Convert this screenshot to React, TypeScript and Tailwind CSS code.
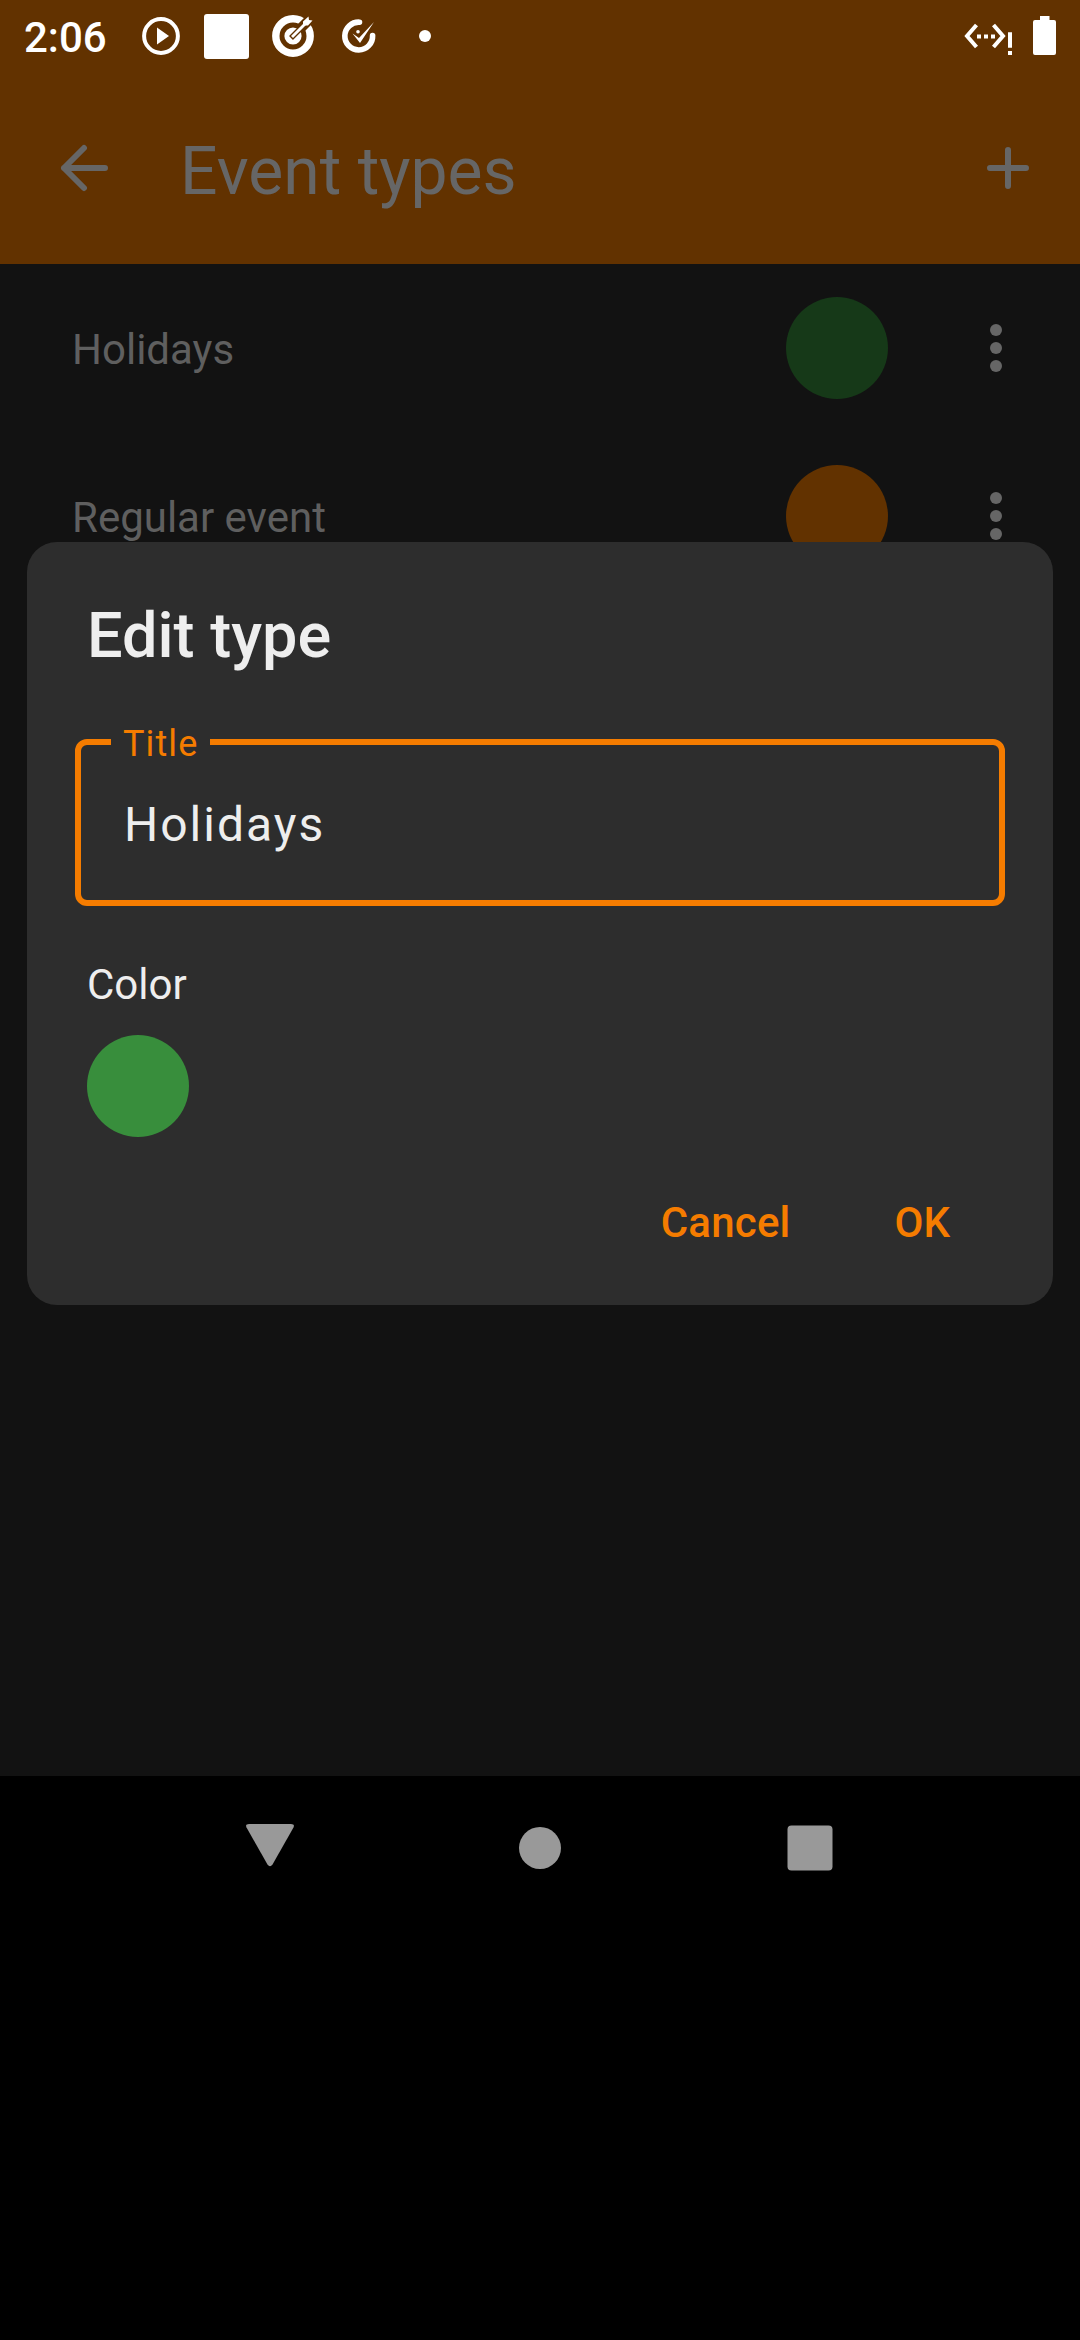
import React from 'react';

function StatusBar() {
  return (
    <div className="flex h-[72px] items-center text-white">
      <span className="ml-[24px] mt-[4px] w-[118px] text-[42px] leading-[48px] font-medium">2:06</span>
      <svg className="size-[38px]" viewBox="0 0 38 38">
        <circle cx="19" cy="19" r="16.9" fill="none" stroke="currentColor" strokeWidth="4" />
        <path d="M15 10.5 27 19 15 27.5Z" fill="currentColor" />
      </svg>
      <span className="ml-6 size-[45px] rounded-[3px] bg-white" />
      <svg className="ml-[23px] size-[42px]" viewBox="0 0 42 42">
        <circle cx="21" cy="21" r="17.2" fill="none" stroke="currentColor" strokeWidth="7.4" />
        <circle cx="21" cy="21" r="8.6" fill="currentColor" />
        <path d="M19 23 31 11" stroke="#623200" strokeWidth="5.5" />
        <path d="M29 13 40 2" stroke="#623200" strokeWidth="10" />
        <path d="M20 22 33 9" stroke="currentColor" strokeWidth="2.8" />
        <path d="M31 10.5V6.5L36.5 1.5 37 5 40.5 5.5 36 10.5Z" fill="currentColor" />
      </svg>
      <svg className="ml-[28px] size-9 overflow-visible" viewBox="0 0 36 36">
        <path d="M17.500 4.200A13.900 13.900 0 1 0 30.600 17.500" fill="none" stroke="currentColor" strokeWidth="5.6" strokeLinecap="round" />
        <path d="M10.5 15.500 17 20 32 4 18 25Z" fill="currentColor" />
        <circle cx="16" cy="13.8" r="1.8" fill="currentColor" />
      </svg>
      <span className="ml-[41px] size-3 rounded-full bg-white" />
      <svg className="ml-auto h-9 w-[50px] overflow-visible" viewBox="0 0 50 36">
        <path d="M12.5 7 3 18 12.500 29M29.500 7 39 18 29.500 29" fill="none" stroke="currentColor" strokeWidth="4" />
        <path d="M13 16.500h4v4h-4zM20 16.500h4v4h-4zM27 16.500h4v4h-4zM44 14.300h4v15.400h-4zM44 33h4v4h-4z" fill="currentColor" />
      </svg>
      <svg className="mr-6 mb-px ml-[19px] h-[39px] w-[23px]" viewBox="0 0 23 39">
        <path d="M7 0h9.500v4H21a2 2 0 0 1 2 2v31a2 2 0 0 1-2 2H2a2 2 0 0 1-2-2V6a2 2 0 0 1 2-2h5z" fill="currentColor" />
      </svg>
    </div>
  );
}

function AppBar() {
  return (
    <div className="flex h-48 items-center pr-[48px] pl-[60px] text-[#666666]">
      <svg className="size-12" viewBox="0 0 48 48" fill="none" stroke="currentColor" strokeWidth="6" strokeLinecap="round" strokeLinejoin="round">
        <path d="M45 24H4M24 4 4 24 24 44" />
      </svg>
      <h1 className="mt-[7px] ml-[72px] text-[66px] leading-[78px] font-normal">Event types</h1>
      <svg className="ml-auto size-12" viewBox="0 0 48 48" stroke="currentColor" strokeWidth="6" strokeLinecap="round">
        <path d="M24 6V42M6 24H42" />
      </svg>
    </div>
  );
}

function EventRow({ name, swatch }: { name: string; swatch: string }) {
  return (
    <div className="flex h-[168px] items-center pr-[78px] pl-[72px]">
      <span className="mt-[3px] flex-1 text-[42px] leading-[50px] text-[#5f5f5f]">{name}</span>
      <span className={`size-[102px] rounded-full ${swatch}`} />
      <div className="ml-[102px] flex flex-col gap-1.5">
        <i className="size-3 rounded-full bg-[#666666]" />
        <i className="size-3 rounded-full bg-[#666666]" />
        <i className="size-3 rounded-full bg-[#666666]" />
      </div>
    </div>
  );
}

function EditDialog() {
  return (
    <section className="absolute top-[542px] left-[27px] flex h-[763px] w-[1026px] flex-col rounded-[30px] bg-[#2d2d2d] px-[48px] text-[#eeeeee]">
      <h2 className="mt-[54px] ml-[12px] text-[63px] leading-[80px] font-medium">Edit type</h2>
      <div className="relative mt-[63px] flex h-[167px] items-center rounded-[12px] border-[6px] border-[#f57c00]">
        <label className="absolute -top-[23px] left-[30px] w-[99px] bg-[#2d2d2d] pl-[12px] text-[36px] leading-[44px] tracking-[1.1px] text-[#f57c00]">
          Title
        </label>
        <span className="mt-[4px] ml-[43px] text-[48px] leading-[56px] tracking-[2px]">Holidays</span>
      </div>
      <span className="mt-[54px] ml-[12px] text-[42px] leading-[50px]">Color</span>
      <span className="mt-[25px] ml-[12px] size-[102px] rounded-full bg-[#388e3c]" />
      <div className="mt-[61px] flex justify-end pr-[55px] text-[42px] leading-[50px] font-medium text-[#f57c00]">
        <span className="tracking-[0.2px]">Cancel</span>
        <span className="ml-[104px]">OK</span>
      </div>
    </section>
  );
}

function NavBar() {
  return (
    <div className="flex h-[564px] justify-center gap-[222px] bg-black pt-[47px] text-[#999999]">
      <svg className="size-12" viewBox="0 0 48 48">
        <path d="M3 1H45Q49 1 47.500 4.500L26.500 41.500Q24 45 21.500 41.500L.5 4.500Q-1 1 3 1Z" fill="currentColor" />
      </svg>
      <svg className="size-12" viewBox="0 0 48 48">
        <circle cx="24" cy="25" r="21" fill="currentColor" />
      </svg>
      <svg className="size-12" viewBox="0 0 48 48">
        <rect x="1.500" y="2.500" width="45" height="45" rx="4" fill="currentColor" />
      </svg>
    </div>
  );
}

export default function App() {
  return (
    <main className="relative flex h-[2340px] w-[1080px] flex-col overflow-hidden bg-[#121212] font-['Roboto',sans-serif]">
      <header className="h-[264px] bg-[#623200]">
        <StatusBar />
        <AppBar />
      </header>
      <div className="flex-1">
        <EventRow name="Holidays" swatch="bg-[#163918]" />
        <EventRow name="Regular event" swatch="bg-[#623200]" />
      </div>
      <NavBar />
      <EditDialog />
    </main>
  );
}
